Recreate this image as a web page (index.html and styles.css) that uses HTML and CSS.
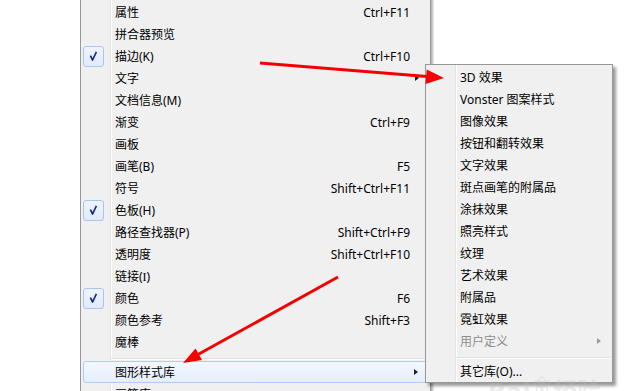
FILE: index.html
```html
<!DOCTYPE html>
<html lang="zh-CN">
<head>
    <meta charset="UTF-8">
    <title>窗口菜单 - 图形样式库</title>
    <link rel="stylesheet" href="styles.css">
</head>
<body>
    <div class="desk">
        <div class="menu main-menu">
            <div class="item"><span class="gut"></span><span class="label">属性</span><span class="key">Ctrl+F11</span><span class="sub"></span></div>
            <div class="item"><span class="gut"></span><span class="label">拼合器预览</span><span class="key"></span><span class="sub"></span></div>
            <div class="item checked"><span class="gut"><span class="check"><svg width="21" height="21" viewBox="0 0 21 21"><path d="M7.4 9.6 L9.6 14 L13.4 5.8" fill="none" stroke="#1d2c86" stroke-width="1.7" stroke-linejoin="round"/></svg></span></span><span class="label">描边(K)</span><span class="key">Ctrl+F10</span><span class="sub"></span></div>
            <div class="item"><span class="gut"></span><span class="label">文字</span><span class="key"></span><span class="sub"><i class="tri"></i></span></div>
            <div class="item"><span class="gut"></span><span class="label">文档信息(M)</span><span class="key"></span><span class="sub"></span></div>
            <div class="item"><span class="gut"></span><span class="label">渐变</span><span class="key">Ctrl+F9</span><span class="sub"></span></div>
            <div class="item"><span class="gut"></span><span class="label">画板</span><span class="key"></span><span class="sub"></span></div>
            <div class="item"><span class="gut"></span><span class="label">画笔(B)</span><span class="key">F5</span><span class="sub"></span></div>
            <div class="item"><span class="gut"></span><span class="label">符号</span><span class="key">Shift+Ctrl+F11</span><span class="sub"></span></div>
            <div class="item checked"><span class="gut"><span class="check"><svg width="21" height="21" viewBox="0 0 21 21"><path d="M7.4 9.6 L9.6 14 L13.4 5.8" fill="none" stroke="#1d2c86" stroke-width="1.7" stroke-linejoin="round"/></svg></span></span><span class="label">色板(H)</span><span class="key"></span><span class="sub"></span></div>
            <div class="item"><span class="gut"></span><span class="label">路径查找器(P)</span><span class="key">Shift+Ctrl+F9</span><span class="sub"></span></div>
            <div class="item"><span class="gut"></span><span class="label">透明度</span><span class="key">Shift+Ctrl+F10</span><span class="sub"></span></div>
            <div class="item"><span class="gut"></span><span class="label">链接(<span class="serif">I</span>)</span><span class="key"></span><span class="sub"></span></div>
            <div class="item checked"><span class="gut"><span class="check"><svg width="21" height="21" viewBox="0 0 21 21"><path d="M7.4 9.6 L9.6 14 L13.4 5.8" fill="none" stroke="#1d2c86" stroke-width="1.7" stroke-linejoin="round"/></svg></span></span><span class="label">颜色</span><span class="key">F6</span><span class="sub"></span></div>
            <div class="item"><span class="gut"></span><span class="label">颜色参考</span><span class="key">Shift+F3</span><span class="sub"></span></div>
            <div class="item"><span class="gut"></span><span class="label">魔棒</span><span class="key"></span><span class="sub"></span></div>
            <div class="sep"></div>
            <div class="item hot"><span class="gut"></span><span class="label">图形样式库</span><span class="key"></span><span class="sub"><i class="tri"></i></span></div>
            <div class="item"><span class="gut"></span><span class="label">画笔库</span><span class="key"></span><span class="sub"><i class="tri"></i></span></div>
        </div>

        <div class="menu sub-menu">
            <div class="item"><span class="gut"></span><span class="label">3D 效果</span><span class="sub"></span></div>
            <div class="item"><span class="gut"></span><span class="label">Vonster 图案样式</span><span class="sub"></span></div>
            <div class="item"><span class="gut"></span><span class="label">图像效果</span><span class="sub"></span></div>
            <div class="item"><span class="gut"></span><span class="label">按钮和翻转效果</span><span class="sub"></span></div>
            <div class="item"><span class="gut"></span><span class="label">文字效果</span><span class="sub"></span></div>
            <div class="item"><span class="gut"></span><span class="label">斑点画笔的附属品</span><span class="sub"></span></div>
            <div class="item"><span class="gut"></span><span class="label">涂抹效果</span><span class="sub"></span></div>
            <div class="item"><span class="gut"></span><span class="label">照亮样式</span><span class="sub"></span></div>
            <div class="item"><span class="gut"></span><span class="label">纹理</span><span class="sub"></span></div>
            <div class="item"><span class="gut"></span><span class="label">艺术效果</span><span class="sub"></span></div>
            <div class="item"><span class="gut"></span><span class="label">附属品</span><span class="sub"></span></div>
            <div class="item"><span class="gut"></span><span class="label">霓虹效果</span><span class="sub"></span></div>
            <div class="item disabled"><span class="gut"></span><span class="label">用户定义</span><span class="sub"><i class="tri"></i></span></div>
            <div class="sep"></div>
            <div class="item"><span class="gut"></span><span class="label">其它库(O)...</span><span class="sub"></span></div>
        </div>

        <!-- 标注箭头 -->
        <svg class="arrows" width="638" height="391" viewBox="0 0 638 391">
            <line x1="260" y1="63" x2="427" y2="76.6" stroke="#f40000" stroke-width="3"/>
            <polygon points="426.7,69.5 444,78 425.5,84" fill="#f40000"/>
            <line x1="338" y1="277" x2="197" y2="355" stroke="#f40000" stroke-width="3"/>
            <polygon points="202,360 183,363 195.5,348.5" fill="#f40000"/>
        </svg>

        <div class="watermark"><span>Bai</span><span class="paw">&#x2740;</span><span>经验</span></div>
    </div>
</body>
</html>
```

FILE: styles.css
```css
body {
    margin: 0;
    padding: 0;
    background: #fff;
    font-family: "Noto Sans", "Noto Sans CJK SC", sans-serif;
    font-size: 12px;
    color: #000;
    overflow: hidden;
}

.desk {
    position: relative;
    width: 638px;
    height: 391px;
    overflow: hidden;
}

.menu {
    position: absolute;
    box-sizing: border-box;
    border: 1px solid #979797;
    background:
        linear-gradient(to right, transparent 29px, #e2e3e3 29px, #e2e3e3 30px, #fff 30px, #fff 31px, transparent 31px),
        #f0f0f0;
}

.main-menu {
    left: 80px;
    top: -3px;
    width: 351px;
    padding: 3px 0 2px;
    box-shadow: 2px 2px 2px rgba(0,0,0,0.3);
}

.sub-menu {
    left: 425px;
    top: 64px;
    width: 188px;
    padding: 1px 0 0;
    box-shadow: 3px 3px 3px rgba(0,0,0,0.4);
}

.item {
    display: flex;
    align-items: center;
    height: 22px;
    margin: 0 2px;
    box-sizing: border-box;
    white-space: nowrap;
}

.gut {
    width: 28px;
    height: 22px;
    flex: none;
    display: flex;
    align-items: center;
}

.label {
    flex: 1;
    padding-left: 4px;
}

.key {
    text-align: right;
}

.sub {
    width: 18px;
    flex: none;
    display: flex;
    align-items: center;
    padding-left: 5px;
    box-sizing: border-box;
}

.tri {
    display: block;
    width: 0;
    height: 0;
    border-top: 3.5px solid transparent;
    border-bottom: 3.5px solid transparent;
    border-left: 4px solid #202020;
}

.check {
    display: block;
    width: 21px;
    height: 21px;
    box-sizing: border-box;
    border: 1px solid #a8c6ee;
    border-radius: 3px;
    background: linear-gradient(#eef4fd, #e1ebfa);
}

.check svg {
    display: block;
    margin: -1px;
}

.serif {
    font-family: "Liberation Serif", serif;
}

.hot {
    border: 1px solid #aecdf3;
    border-radius: 3px;
    background: linear-gradient(#f4f8fe, #e4eefb);
}

.hot .gut {
    width: 27px;
}

.disabled {
    color: #8d8d8d;
}

.disabled .tri {
    border-left-color: #9a9a9a;
}

.sep {
    height: 8px;
    margin: 0 2px 0 30px;
    background: linear-gradient(transparent 5px, #e0e0e0 5px, #e0e0e0 6px, #fff 6px, #fff 7px, transparent 7px);
}

.arrows {
    position: absolute;
    left: 0;
    top: 0;
    pointer-events: none;
}

.watermark {
    position: absolute;
    left: 488px;
    top: 372px;
    display: flex;
    align-items: flex-end;
    gap: 2px;
    font-family: "DejaVu Sans", "Noto Sans CJK SC", sans-serif;
    font-size: 24px;
    font-weight: bold;
    color: rgba(190,190,190,0.3);
    pointer-events: none;
}

.paw {
    font-size: 22px;
    margin-bottom: 10px;
}
```
